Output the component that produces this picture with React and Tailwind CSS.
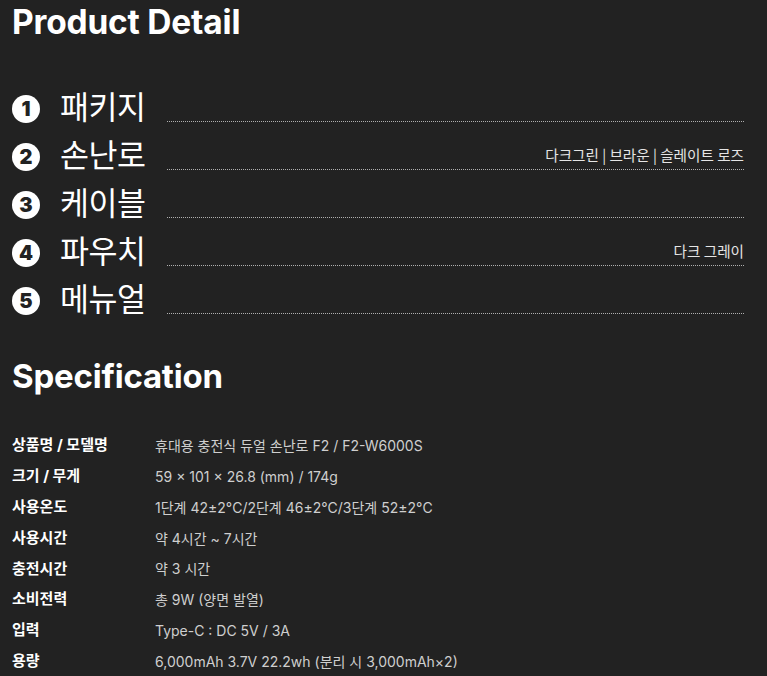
const items = [
  { no: 1, name: "패키지", note: "" },
  { no: 2, name: "손난로", note: "다크그린 | 브라운 | 슬레이트 로즈" },
  { no: 3, name: "케이블", note: "" },
  { no: 4, name: "파우치", note: "다크 그레이" },
  { no: 5, name: "메뉴얼", note: "" },
]

const specs = [
  ["상품명 / 모델명", "휴대용 충전식 듀얼 손난로 F2 / F2-W6000S"],
  ["크기 / 무게", "59 × 101 × 26.8 (mm) / 174g"],
  ["사용온도", "1단계 42±2°C/2단계 46±2°C/3단계 52±2°C"],
  ["사용시간", "약 4시간 ~ 7시간"],
  ["충전시간", "약 3 시간"],
  ["소비전력", "총 9W (양면 발열)"],
  ["입력", "Type-C : DC 5V / 3A"],
  ["용량", "6,000mAh 3.7V 22.2wh (분리 시 3,000mAh×2)"],
]

export default function App() {
  return (
    <div className="min-h-[676px] bg-[#222222] pl-3 pr-[23px] text-white font-['Inter','Noto_Sans_CJK_KR',sans-serif]">
      <h1 className="pt-[2px] text-[33.5px] font-bold leading-[40px] tracking-[-0.2px]">Product Detail</h1>

      <ul className="mt-[34px] flex flex-col">
        {items.map((it) => (
          <li key={it.no} className="flex h-12 items-end">
            <div className="mb-[1px] flex h-7 w-7 shrink-0 items-center justify-center rounded-full bg-white text-[20px] font-black leading-none text-[#222222]">
              {it.no}
            </div>
            <span className="ml-5 text-[31.5px] leading-[38px] font-['Noto_Sans_CJK_KR',sans-serif] tracking-[-0.5px]">
              {it.name}
            </span>
            <div className="ml-[22px] mb-[2px] flex h-[30px] flex-1 items-center justify-end border-b border-dotted border-[#b0b0b0]">
              <span className="text-[14.6px] text-[#e5e5e5] font-['Noto_Sans_CJK_KR',sans-serif]">{it.note}</span>
            </div>
          </li>
        ))}
      </ul>

      <h2 className="mt-[40px] text-[33px] font-bold leading-[40px] tracking-[-0.2px]">Specification</h2>

      <div className="mt-[34px] flex flex-col">
        {specs.map(([k, v]) => (
          <div key={k} className="flex h-[30.86px] items-center">
            <span className="w-[143px] shrink-0 text-[15px] font-bold">{k}</span>
            <span className="text-[14px] text-[#cfcfcf]">{v}</span>
          </div>
        ))}
      </div>
    </div>
  )
}
